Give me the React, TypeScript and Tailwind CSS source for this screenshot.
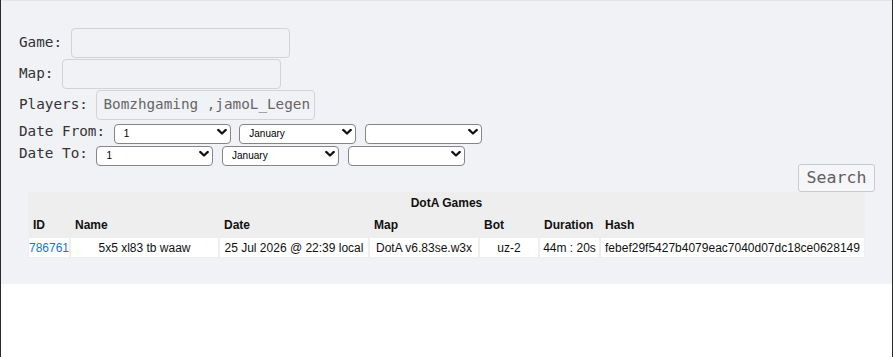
import React from "react";

const mono = { fontFamily: '"DejaVu Sans Mono", monospace' };

function Chevron() {
  return (
    <svg
      width="10"
      height="7"
      viewBox="0 0 10 7"
      className="pointer-events-none absolute right-[4px] top-1/2 -translate-y-1/2"
    >
      <path d="M1.2 1.4 L5 5 L8.8 1.4" fill="none" stroke="#111" strokeWidth="2.2" strokeLinecap="round" strokeLinejoin="round" />
    </svg>
  );
}

function Sel({ value, options }: { value: string; options: string[] }) {
  return (
    <div className="relative h-[20px] w-[117px]">
      <select
        defaultValue={value}
        className="h-full w-full appearance-none rounded-[4px] border border-[#858585] bg-white pl-[9px] text-[10px] text-black outline-none [font-family:'Liberation_Sans',Arial,sans-serif]"
      >
        {options.map((o) => (
          <option key={o} value={o}>
            {o}
          </option>
        ))}
      </select>
      <Chevron />
    </div>
  );
}

const days = ["1", "2", "3"];
const months = ["January", "February", "March"];
const years = ["", "2025", "2026"];

function TextInput() {
  return (
    <input
      readOnly
      className="h-[30px] w-[219px] rounded-[4px] border border-[#d2d3d7] bg-transparent pl-[6px] pr-[4px] text-[14.3px] text-[#666] outline-none"
      style={mono}
    />
  );
}

function FilledField({ value }: { value: string }) {
  return (
    <div
      className="flex h-[30px] w-[219px] items-center overflow-hidden whitespace-nowrap rounded-[4px] border border-[#d2d3d7] pl-[6px] pr-[4px] text-[14.3px] text-[#666]"
      style={mono}
    >
      {value}
    </div>
  );
}

export default function App() {
  const cols = "grid grid-cols-[40px_147px_148px_108px_58px_59px_263px] gap-x-[2px]";
  return (
    <div className="h-[357px] w-[893px] border-l border-r border-[#2a2a2a] bg-white">
      <div className="h-[284px] border-t border-[#e4e5ea] bg-[#f1f2f6] pl-[18px] pr-[17px] pt-[27px] text-[#333]" style={mono}>
        <div className="flex h-[30px] items-center gap-[8.6px] text-[14.3px]">
          <span>Game:</span>
          <TextInput />
        </div>
        <div className="mt-[1px] flex h-[30px] items-center gap-[8.6px] text-[14.3px]">
          <span>Map:</span>
          <TextInput />
        </div>
        <div className="mt-[1px] flex h-[30px] items-center gap-[8.6px] text-[14.3px]">
          <span>Players:</span>
          <FilledField value="Bomzhgaming ,jamoL_Legen" />
        </div>
        <div className="mt-[2px] flex h-[20px] items-center gap-[8.6px] text-[14.3px]">
          <span>Date From:</span>
          <Sel value="1" options={days} />
          <Sel value="January" options={months} />
          <Sel value="" options={years} />
        </div>
        <div className="mt-[2px] flex h-[20px] items-center gap-[8.6px] text-[14.3px]">
          <span>Date To:</span>
          <Sel value="1" options={days} />
          <Sel value="January" options={months} />
          <Sel value="" options={years} />
        </div>
        <div className="flex justify-end">
          <button
            className="h-[28px] w-[77px] rounded-[3px] border border-[#c9cacf] bg-[#f6f6f8] text-[16.6px] text-[#606060]"
            style={mono}
          >
            Search
          </button>
        </div>
        <div
          className="ml-[9px] w-[837px] bg-[#eeeeee] p-[1px] text-[12px] text-[#111]"
          style={{ fontFamily: '"Liberation Sans", Arial, sans-serif' }}
        >
          <div className="flex h-[20px] items-center justify-center font-bold">DotA Games</div>
          <div className={`${cols} mt-[1px] h-[22px] items-center font-bold`}>
            <div className="pl-[4px]">ID</div>
            <div className="pl-[4px]">Name</div>
            <div className="pl-[4px]">Date</div>
            <div className="pl-[4px]">Map</div>
            <div className="pl-[4px]">Bot</div>
            <div className="pl-[4px]">Duration</div>
            <div className="pl-[4px]">Hash</div>
          </div>
          <div className={`${cols} mt-[2px] h-[19px]`}>
            <div className="flex items-center bg-white text-[#1f6fd6] whitespace-nowrap">786761</div>
            <div className="flex items-center justify-center bg-white whitespace-nowrap">5x5 xl83 tb waaw</div>
            <div className="flex items-center justify-center bg-white whitespace-nowrap">25 Jul 2026 @ 22:39 local</div>
            <div className="flex items-center justify-center bg-white whitespace-nowrap">DotA v6.83se.w3x</div>
            <div className="flex items-center justify-center bg-white whitespace-nowrap">uz-2</div>
            <div className="flex items-center justify-center bg-white whitespace-nowrap">44m : 20s</div>
            <div className="flex items-center justify-center bg-white whitespace-nowrap">febef29f5427b4079eac7040d07dc18ce0628149</div>
          </div>
        </div>
      </div>
    </div>
  );
}
